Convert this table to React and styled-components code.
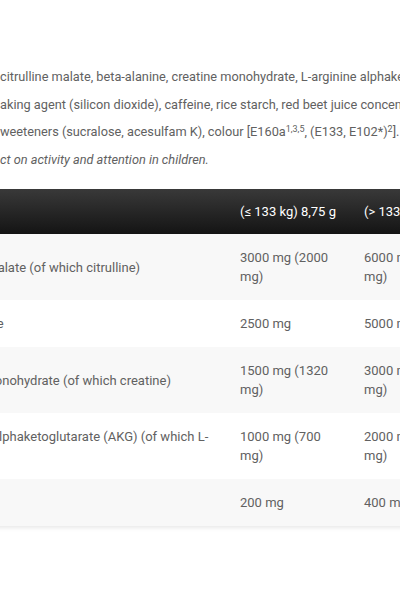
import React from 'react';
import styled, { createGlobalStyle } from 'styled-components';

const GlobalStyle = createGlobalStyle`
  html, body {
    margin: 0;
    padding: 0;
    background: #fff;
  }
  body {
    font-family: Roboto, "Liberation Sans", Arial, sans-serif;
    -webkit-font-smoothing: antialiased;
  }
`;

const Page = styled.div`
  width: 400px;
  height: 601px;
  overflow: hidden;
  background: #fff;
  padding-top: 63px;
  box-sizing: border-box;
`;

const Ingredients = styled.p`
  margin: 0;
  font-size: 12.75px;
  line-height: 27.5px;
  color: #616161;
  white-space: nowrap;

  sup {
    font-size: 9px;
    line-height: 0;
    vertical-align: 4px;
  }
`;

const Note = styled.em`
  font-style: italic;
`;

const TableFrame = styled.div`
  margin-top: 16px;
  margin-left: -80px;
  width: 620px;
  padding-bottom: 8px;
`;

const DoseTable = styled.table`
  width: 620px;
  table-layout: fixed;
  border-collapse: collapse;
  font-size: 13px;
  line-height: 19px;
  color: #616161;
  box-shadow: 0 4px 4px -2px rgba(0, 0, 0, 0.09);
`;

const HeadRow = styled.tr`
  background: linear-gradient(#393939, #141414);
`;

const HeadCell = styled.th`
  padding: 13px 12px;
  text-align: left;
  font-weight: 400;
  color: #fff;
  white-space: nowrap;
  overflow: hidden;
`;

const Row = styled.tr`
  background: ${p => (p.$shaded ? '#f8f8f8' : '#fff')};
`;

const Cell = styled.td`
  padding: 14px 12px;
  vertical-align: middle;
`;

const rows = [
  ['Citrulline malate (of which citrulline)', '3000 mg (2000 mg)', '6000 mg (4000 mg)'],
  ['Beta-alanine', '2500 mg', '5000 mg'],
  ['Creatine monohydrate (of which creatine)', '1500 mg (1320 mg)', '3000 mg (2640 mg)'],
  ['L-arginine alphaketoglutarate (AKG) (of which L-arginine)', '1000 mg (700 mg)', '2000 mg (1400 mg)'],
  ['Caffeine', '200 mg', '400 mg']
];

const App = () => (
  <>
    <GlobalStyle />
    <Page>
      <Ingredients>
        citrulline malate, beta-alanine, creatine monohydrate, L-arginine alphaketoglutarate (AKG),
        <br />
        aking agent (silicon dioxide), caffeine, rice starch, red beet juice concentrate,
        <br />
        weeteners (sucralose, acesulfam K), colour [E160a<sup>1,3,5</sup>, (E133, E102*)<sup>2</sup>].
        <br />
        <Note>ct on activity and attention in children.</Note>
      </Ingredients>
      <TableFrame>
        <DoseTable>
          <colgroup>
            <col style={{ width: 308 }} />
            <col style={{ width: 124 }} />
            <col style={{ width: 124 }} />
            <col />
          </colgroup>
          <thead>
            <HeadRow>
              <HeadCell>&nbsp;</HeadCell>
              <HeadCell>(≤ 133 kg) 8,75 g</HeadCell>
              <HeadCell>(&gt; 133 kg) 17,5 g</HeadCell>
              <HeadCell />
            </HeadRow>
          </thead>
          <tbody>
            {rows.map(([name, low, high], i) => (
              <Row key={name} $shaded={i % 2 === 0}>
                <Cell>{name}</Cell>
                <Cell>{low}</Cell>
                <Cell>{high}</Cell>
                <Cell />
              </Row>
            ))}
          </tbody>
        </DoseTable>
      </TableFrame>
    </Page>
  </>
);

export default App;
